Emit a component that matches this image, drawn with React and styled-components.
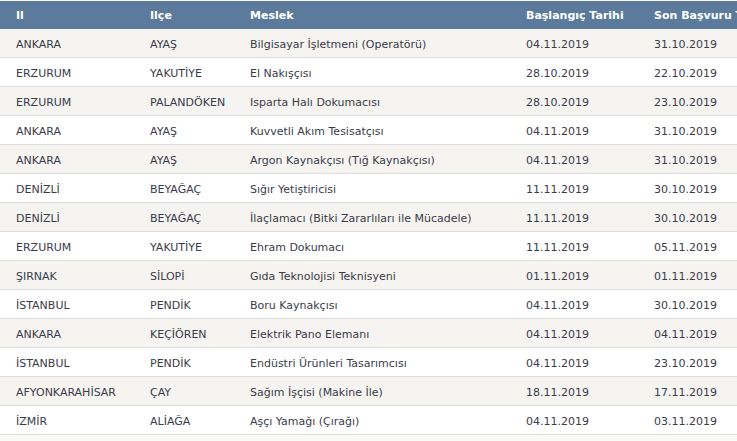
import React from "react";
import styled, { createGlobalStyle } from "styled-components";

const GlobalStyle = createGlobalStyle`
  html, body {
    margin: 0;
    padding: 0;
    background: #ffffff;
    overflow: hidden;
  }
`;

const Page = styled.div`
  width: 737px;
  height: 441px;
  overflow: hidden;
  padding-top: 1px;
  box-sizing: border-box;
  background: #f9f9f8;
`;

const Table = styled.table`
  width: 800px;
  border-collapse: collapse;
  table-layout: fixed;
  font-family: "DejaVu Sans", Verdana, sans-serif;
  font-size: 11px;
  color: #3b3b4a;
`;

const HeadCell = styled.th`
  height: 28px;
  padding: 0 0 0 16px;
  text-align: left;
  background: #5b7a9c;
  color: #ffffff;
  font-weight: bold;
  white-space: nowrap;
  overflow: hidden;
`;

const Row = styled.tr`
  background: ${({ $odd }) => ($odd ? "#f5f4f1" : "#ffffff")};
  border-bottom: 1px solid #dddddd;
`;

const Cell = styled.td`
  height: 26px;
  padding: 2px 0 0 16px;
  white-space: nowrap;
  overflow: hidden;
`;

const columns = [
  { title: "Il", width: 134 },
  { title: "Ilçe", width: 100 },
  { title: "Meslek", width: 276 },
  { title: "Başlangıç Tarihi", width: 128 },
  { title: "Son Başvuru Tarihi", width: 162 },
];

const rows = [
  ["ANKARA", "AYAŞ", "Bilgisayar İşletmeni (Operatörü)", "04.11.2019", "31.10.2019"],
  ["ERZURUM", "YAKUTİYE", "El Nakışçısı", "28.10.2019", "22.10.2019"],
  ["ERZURUM", "PALANDÖKEN", "Isparta Halı Dokumacısı", "28.10.2019", "23.10.2019"],
  ["ANKARA", "AYAŞ", "Kuvvetli Akım Tesisatçısı", "04.11.2019", "31.10.2019"],
  ["ANKARA", "AYAŞ", "Argon Kaynakçısı (Tığ Kaynakçısı)", "04.11.2019", "31.10.2019"],
  ["DENİZLİ", "BEYAĞAÇ", "Sığır Yetiştiricisi", "11.11.2019", "30.10.2019"],
  ["DENİZLİ", "BEYAĞAÇ", "İlaçlamacı (Bitki Zararlıları ile Mücadele)", "11.11.2019", "30.10.2019"],
  ["ERZURUM", "YAKUTİYE", "Ehram Dokumacı", "11.11.2019", "05.11.2019"],
  ["ŞIRNAK", "SİLOPİ", "Gıda Teknolojisi Teknisyeni", "01.11.2019", "01.11.2019"],
  ["İSTANBUL", "PENDİK", "Boru Kaynakçısı", "04.11.2019", "30.10.2019"],
  ["ANKARA", "KEÇİÖREN", "Elektrik Pano Elemanı", "04.11.2019", "04.11.2019"],
  ["İSTANBUL", "PENDİK", "Endüstri Ürünleri Tasarımcısı", "04.11.2019", "23.10.2019"],
  ["AFYONKARAHİSAR", "ÇAY", "Sağım İşçisi (Makine İle)", "18.11.2019", "17.11.2019"],
  ["İZMİR", "ALİAĞA", "Aşçı Yamağı (Çırağı)", "04.11.2019", "03.11.2019"],
];

export default function App() {
  return (
    <>
      <GlobalStyle />
      <Page>
        <Table>
          <colgroup>
            {columns.map((c) => (
              <col key={c.title} style={{ width: c.width }} />
            ))}
          </colgroup>
          <thead>
            <tr>
              {columns.map((c) => (
                <HeadCell key={c.title}>{c.title}</HeadCell>
              ))}
            </tr>
          </thead>
          <tbody>
            {rows.map((r, i) => (
              <Row key={i} $odd={i % 2 === 0}>
                {r.map((v, j) => (
                  <Cell key={j}>{v}</Cell>
                ))}
              </Row>
            ))}
          </tbody>
        </Table>
      </Page>
    </>
  );
}
